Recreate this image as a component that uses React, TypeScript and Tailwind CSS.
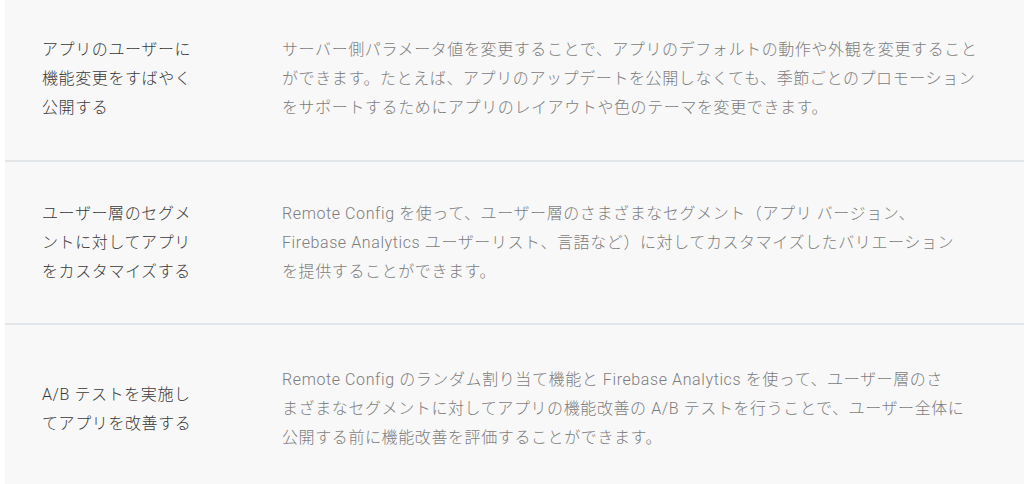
import React from "react";

type Feature = {
  title: string[];
  body: string[];
  pad: string;
};

const features: Feature[] = [
  {
    title: ["アプリのユーザーに", "機能変更をすばやく", "公開する"],
    body: [
      "サーバー側パラメータ値を変更することで、アプリのデフォルトの動作や外観を変更すること",
      "ができます。たとえば、アプリのアップデートを公開しなくても、季節ごとのプロモーション",
      "をサポートするためにアプリのレイアウトや色のテーマを変更できます。",
    ],
    pad: "pt-[35px] pb-[38px]",
  },
  {
    title: ["ユーザー層のセグメ", "ントに対してアプリ", "をカスタマイズする"],
    body: [
      "Remote Config を使って、ユーザー層のさまざまなセグメント（アプリ バージョン、",
      "Firebase Analytics ユーザーリスト、言語など）に対してカスタマイズしたバリエーション",
      "を提供することができます。",
    ],
    pad: "py-[37px]",
  },
  {
    title: ["A/B テストを実施し", "てアプリを改善する"],
    body: [
      "Remote Config のランダム割り当て機能と Firebase Analytics を使って、ユーザー層のさ",
      "まざまなセグメントに対してアプリの機能改善の A/B テストを行うことで、ユーザー全体に",
      "公開する前に機能改善を評価することができます。",
    ],
    pad: "pt-[40px] pb-[34px]",
  },
];

const App = () => {
  return (
    <div className="min-h-[484px] bg-white pl-[5px] font-['Roboto','Noto_Sans_CJK_JP',sans-serif] text-[16px] font-light leading-[29px] tracking-[0.6px]">
      <div className="min-h-[484px] bg-[#f8f8f8]">
        {features.map((feature, i) => (
          <section
            key={i}
            className={`flex items-center pl-[37px] ${feature.pad} ${
              i < features.length - 1 ? "border-b-2 border-[#e3e6e9]" : ""
            }`}
          >
            {/* Title */}
            <div className="w-[240px] shrink-0 text-[#3a3a3a]">
              {feature.title.map((line, j) => (
                <div key={j} className="whitespace-nowrap">
                  {line}
                </div>
              ))}
            </div>

            {/* Description */}
            <div className="text-[#7d7d7d]">
              {feature.body.map((line, j) => (
                <div key={j} className="whitespace-nowrap">
                  {line}
                </div>
              ))}
            </div>
          </section>
        ))}
      </div>
    </div>
  );
};

export default App;
